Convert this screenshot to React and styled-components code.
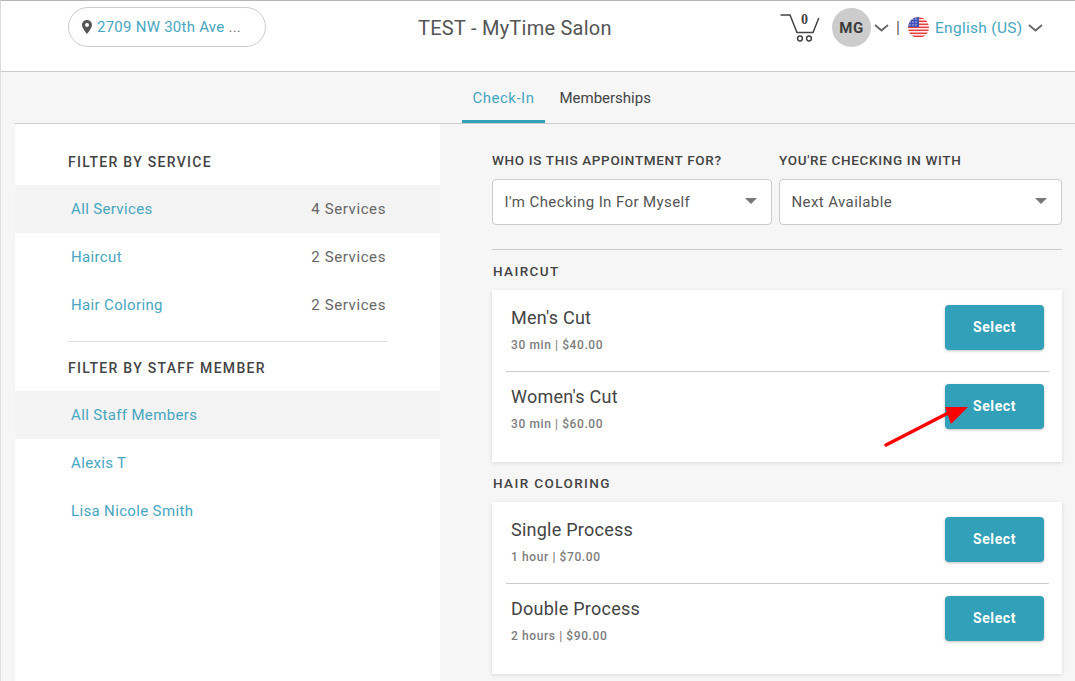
import React from 'react'
import styled, { createGlobalStyle } from 'styled-components'

const services = [
    { name: 'All Services', count: '4 Services', active: true },
    { name: 'Haircut', count: '2 Services' },
    { name: 'Hair Coloring', count: '2 Services' },
]

const staff = [
    { name: 'All Staff Members', active: true },
    { name: 'Alexis T' },
    { name: 'Lisa Nicole Smith' },
]

const groups = [
    {
        title: 'HAIRCUT',
        items: [
            { name: "Men's Cut", info: '30 min | $40.00' },
            { name: "Women's Cut", info: '30 min | $60.00' },
        ],
    },
    {
        title: 'HAIR COLORING',
        items: [
            { name: 'Single Process', info: '1 hour | $70.00' },
            { name: 'Double Process', info: '2 hours | $90.00' },
        ],
    },
]

const PinIcon = () => (
    <svg width="10" height="14" viewBox="0 0 10 14">
        <path
            fill="#555"
            fillRule="evenodd"
            d="M5 0C2.2 0 0 2.2 0 5c0 3.4 5 9 5 9s5-5.600 5-9c0-2.800-2.200-5-5-5zm0 7a2 2 0 1 1 0-4 2 2 0 0 1 0 4z"
        />
    </svg>
)

const CartIcon = () => (
    <svg width="40" height="30" viewBox="0 0 40 30" fill="none" stroke="#444">
        <path strokeWidth="1.500" d="M0.500 2H10L17 19.500H33L38.800 5" />
        <circle cx="20" cy="25.500" r="2.400" strokeWidth="1.500" />
        <circle cx="29" cy="25.500" r="2.400" strokeWidth="1.500" />
    </svg>
)

const Chevron = () => (
    <svg width="15" height="8" viewBox="0 0 15 8" fill="none">
        <path stroke="#666" strokeWidth="1.800" d="M1 1l6.500 5.500L14 1" />
    </svg>
)

const FlagIcon = () => (
    <svg width="21" height="21" viewBox="0 0 21 21">
        <defs>
            <clipPath id="flag-circle">
                <circle cx="10.500" cy="10.500" r="10.500" />
            </clipPath>
        </defs>
        <g clipPath="url(#flag-circle)">
            <rect width="21" height="21" fill="#fff" />
            {[0, 3, 6, 9, 12, 15, 18].map((y) => (
                <rect key={y} y={y + 0.5} width="21" height="1.600" fill="#ea3f3f" />
            ))}
            <rect width="11" height="10" fill="#3f51b5" />
            {[2, 5, 8].map((x) =>
                [2, 5, 8].map((y) => (
                    <circle key={`${x}-${y}`} cx={x} cy={y} r="0.700" fill="#dfe3ff" />
                ))
            )}
        </g>
    </svg>
)

const App = () => (
    <Page>
        <GlobalStyle />
        <Header>
            <LocationCell>
                <LocationPill>
                    <PinIcon />
                    <LocationText>
                        2709 NW 30th Ave <Dots>...</Dots>
                    </LocationText>
                </LocationPill>
            </LocationCell>
            <SalonTitle>TEST - MyTime Salon</SalonTitle>
            <HeaderActions>
                <CartWrap>
                    <CartIcon />
                    <CartCount>0</CartCount>
                </CartWrap>
                <Avatar>MG</Avatar>
                <Chevron />
                <Divider>|</Divider>
                <FlagIcon />
                <Language>English (US)</Language>
                <Chevron />
            </HeaderActions>
        </Header>
        <Tabs>
            <Tab $active>Check-In</Tab>
            <Tab>Memberships</Tab>
        </Tabs>
        <Content>
            <Sidebar>
                <SidebarTitle>FILTER BY SERVICE</SidebarTitle>
                {services.map(({ name, count, active }) => (
                    <FilterRow key={name} $active={active}>
                        <FilterName>{name}</FilterName>
                        <FilterCount>{count}</FilterCount>
                    </FilterRow>
                ))}
                <SidebarRule />
                <SidebarTitle>FILTER BY STAFF MEMBER</SidebarTitle>
                {staff.map(({ name, active }) => (
                    <FilterRow key={name} $active={active}>
                        <FilterName>{name}</FilterName>
                    </FilterRow>
                ))}
            </Sidebar>
            <Main>
                <Selectors>
                    <SelectorField>
                        <SelectorLabel>WHO IS THIS APPOINTMENT FOR?</SelectorLabel>
                        <SelectBox>
                            I'm Checking In For Myself
                            <Caret />
                        </SelectBox>
                    </SelectorField>
                    <SelectorField>
                        <SelectorLabel>YOU'RE CHECKING IN WITH</SelectorLabel>
                        <SelectBox>
                            Next Available
                            <Caret />
                        </SelectBox>
                    </SelectorField>
                </Selectors>
                <MainRule />
                {groups.map(({ title, items }) => (
                    <section key={title}>
                        <GroupTitle>{title}</GroupTitle>
                        <Card>
                            {items.map(({ name, info }) => (
                                <ServiceRow key={name}>
                                    <ServiceText>
                                        <ServiceName>{name}</ServiceName>
                                        <ServiceInfo>{info}</ServiceInfo>
                                    </ServiceText>
                                    <SelectButton>Select</SelectButton>
                                </ServiceRow>
                            ))}
                        </Card>
                    </section>
                ))}
            </Main>
        </Content>
        <Annotation width="90" height="50" viewBox="0 0 90 50">
            <path d="M2 44L68 10" stroke="#f00" strokeWidth="3.500" strokeLinecap="round" />
            <path d="M84 6H61L67 23z" fill="#f00" />
        </Annotation>
    </Page>
)

export default App

const GlobalStyle = createGlobalStyle`
    html, body {
        margin: 0;
        height: 100%;
        overflow: hidden;
    }
    body {
        background: #f6f6f6;
        font-family: Roboto, "Liberation Sans", sans-serif;
        color: #444;
    }
    * {
        box-sizing: border-box;
    }
`

const Page = styled.div`
    position: relative;
    height: 681px;
    overflow: hidden;
    border-top: 1px solid #b5b5b5;
    border-left: 1px solid #ddd;
`

const Header = styled.header`
    display: grid;
    grid-template-columns: 417px 362px auto;
    height: 71px;
    background: #fff;
    border-bottom: 1px solid #ccc;
`

const LocationCell = styled.div`
    padding: 6px 0 0 67px;
`

const LocationPill = styled.div`
    display: flex;
    align-items: center;
    gap: 5px;
    width: 198px;
    height: 40px;
    padding-left: 13px;
    border: 1px solid #ccc;
    border-radius: 20px;
`

const LocationText = styled.span`
    font-size: 15px;
    letter-spacing: 0.25px;
    color: #48a6bf;
    white-space: nowrap;
`

const Dots = styled.span`
    color: #777;
`

const SalonTitle = styled.div`
    padding-top: 14px;
    font-size: 20px;
    line-height: 27px;
    letter-spacing: 0.25px;
    color: #555;
`

const HeaderActions = styled.div`
    display: flex;
    align-items: center;
    height: 39px;
    margin-top: 7px;
`

const CartWrap = styled.div`
    position: relative;
    width: 40px;
    height: 30px;
    margin-right: 12px;
`

const CartCount = styled.span`
    position: absolute;
    top: -1px;
    left: 21px;
    font-family: "Liberation Serif", serif;
    font-size: 14px;
    font-weight: 700;
    color: #444;
`

const Avatar = styled.div`
    display: flex;
    align-items: center;
    justify-content: center;
    width: 39px;
    height: 39px;
    margin-right: 3px;
    border-radius: 50%;
    background: #ccc;
    font-size: 15px;
    font-weight: 700;
    letter-spacing: 0.5px;
    color: #3c3c3c;
`

const Divider = styled.span`
    margin: 0 8px 0 7px;
    font-size: 16px;
    color: #555;
`

const Language = styled.span`
    margin: 0 6px 0 6px;
    font-size: 15.500px;
    letter-spacing: 0.3px;
    color: #48a6bf;
`

const Tabs = styled.nav`
    display: flex;
    gap: 4px;
    height: 52px;
    margin-left: 14px;
    padding-left: 447px;
    border-bottom: 1px solid #ccc;
`

const Tab = styled.div`
    height: 51px;
    padding: 17px 10.500px 0;
    font-size: 15px;
    letter-spacing: ${({ $active }) => ($active ? '0.5px' : '0')};
    color: ${({ $active }) => ($active ? '#48a6bf' : '#444')};
    border-bottom: ${({ $active }) => ($active ? '3px solid #32a0b8' : 'none')};
`

const Content = styled.div`
    display: flex;
    align-items: flex-start;
    gap: 52px;
    padding-left: 14px;
`

const Sidebar = styled.aside`
    width: 425px;
    height: 560px;
    padding-top: 30px;
    background: #fff;
`

const SidebarTitle = styled.h3`
    margin: 0 0 14px;
    padding-left: 53px;
    font-size: 14px;
    line-height: 17px;
    font-weight: 500;
    letter-spacing: 1.300px;
    color: #444;
`

const FilterRow = styled.div`
    display: flex;
    justify-content: space-between;
    align-items: center;
    height: 48px;
    padding: 0 54px 0 56px;
    background: ${({ $active }) => ($active ? '#f3f3f3' : '#fff')};
`

const FilterName = styled.span`
    font-size: 15px;
    letter-spacing: 0.35px;
    color: #48a6bf;
`

const FilterCount = styled.span`
    font-size: 15px;
    letter-spacing: 0.6px;
    color: #666;
`

const SidebarRule = styled.hr`
    margin: 12px 53px 18px 53px;
    border: 0;
    border-top: 1px solid #ddd;
`

const Main = styled.main`
    width: 570px;
    padding-top: 28px;
`

const Selectors = styled.div`
    display: grid;
    grid-template-columns: 280px 283px;
    gap: 7px;
`

const SelectorField = styled.div`
    display: flex;
    flex-direction: column;
    gap: 10px;
`

const SelectorLabel = styled.label`
    font-size: 13.500px;
    line-height: 17px;
    font-weight: 500;
    letter-spacing: 0.66px;
    white-space: nowrap;
    color: #444;
`

const SelectBox = styled.div`
    position: relative;
    height: 46px;
    padding: 0 12px 0 11.500px;
    background: #fff;
    border: 1px solid #ccc;
    border-radius: 4px;
    font-size: 15px;
    line-height: 44px;
    letter-spacing: 0.4px;
    color: #555;
`

const Caret = styled.span`
    position: absolute;
    top: 18px;
    right: 14px;
    border-left: 6px solid transparent;
    border-right: 6px solid transparent;
    border-top: 6px solid #777;
`

const MainRule = styled.hr`
    margin: 24px 0 13px;
    border: 0;
    border-top: 1px solid #ccc;
`

const GroupTitle = styled.h4`
    margin: 0 0 10px;
    padding-left: 1px;
    font-size: 13.500px;
    line-height: 17px;
    font-weight: 500;
    letter-spacing: 1.400px;
    color: #444;
`

const Card = styled.div`
    margin-bottom: 13px;
    padding: 2px 13px 13px 14px;
    background: #fff;
    box-shadow: 0 1px 4px rgba(0, 0, 0, 0.12);
`

const ServiceRow = styled.div`
    display: flex;
    justify-content: space-between;
    height: 79px;
    padding: 13px 5px 0;

    & + & {
        height: 78px;
        padding-top: 12px;
        border-top: 1px solid #ccc;
    }
`

const ServiceText = styled.div`
    padding-top: 1px;
`

const ServiceName = styled.div`
    font-size: 18px;
    line-height: 24px;
    letter-spacing: 0.25px;
    color: #444;
`

const ServiceInfo = styled.div`
    margin-top: 7px;
    font-size: 12px;
    font-weight: 500;
    line-height: 16px;
    letter-spacing: 0.6px;
    color: #7d7d7d;
`

const SelectButton = styled.button`
    width: 99px;
    height: 45px;
    padding: 0 0 2px;
    border: 0;
    border-radius: 4px;
    background: #32a0b8;
    box-shadow: 0 1px 3px rgba(0, 0, 0, 0.25);
    font-family: inherit;
    font-size: 14px;
    font-weight: 700;
    letter-spacing: 0.6px;
    color: #fff;
`

const Annotation = styled.svg`
    position: absolute;
    left: 883px;
    top: 400px;
`
